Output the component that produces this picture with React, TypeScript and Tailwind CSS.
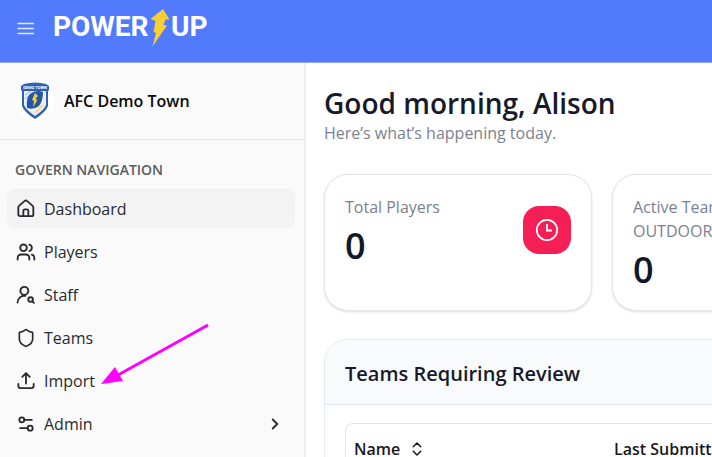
import type { ReactNode } from "react";
import { ChevronRight, ChevronsUpDown, Settings2, Shield, Users } from "lucide-react";

type IconProps = { className?: string };

type NavItem = {
  label: string;
  icon: (props: IconProps) => ReactNode;
  active?: boolean;
  expandable?: boolean;
};

function StrokeIcon({ className, children }: { className?: string; children: ReactNode }) {
  return (
    <svg
      className={className}
      viewBox="0 0 24 24"
      fill="none"
      stroke="currentColor"
      strokeWidth="2.2"
      strokeLinecap="round"
      strokeLinejoin="round"
      aria-hidden="true"
    >
      {children}
    </svg>
  );
}

function HomeIcon({ className }: IconProps) {
  return (
    <StrokeIcon className={className}>
      <path d="M2.8 10.2c0-.9.4-1.7 1.1-2.3l6.2-5.3c1-.9 2.4-.9 3.4 0l6.2 5.3c.7.6 1.1 1.4 1.1 2.3V18.500a2 2 0 0 1-2 2h-14a2 2 0 0 1-2-2Z" />
      <path d="M8.800 20.500v-6a2 2 0 0 1 2-2h2a2 2 0 0 1 2 2v6" />
    </StrokeIcon>
  );
}

function StaffIcon({ className }: IconProps) {
  return (
    <StrokeIcon className={className}>
      <circle cx="10" cy="7" r="4.8" />
      <path d="M1.800 21a8.200 8.200 0 0 1 9.500-8" />
      <circle cx="17.500" cy="17.500" r="2.800" />
      <path d="m21.500 21.500-1.900-1.900" />
    </StrokeIcon>
  );
}

function ImportIcon({ className }: IconProps) {
  return (
    <StrokeIcon className={className}>
      <path d="M2.8 15.5V18a2.5 2.5 0 0 0 2.5 2.5h13.4a2.5 2.5 0 0 0 2.5-2.5v-2.5" />
      <path d="M12 15V2.5M7.5 7 12 2.5 16.5 7" />
    </StrokeIcon>
  );
}

const navItems: NavItem[] = [
  { label: "Dashboard", icon: HomeIcon, active: true },
  { label: "Players", icon: ({ className }) => <Users className={className} strokeWidth={2.2} /> },
  { label: "Staff", icon: StaffIcon },
  { label: "Teams", icon: ({ className }) => <Shield className={className} strokeWidth={2} /> },
  { label: "Import", icon: ImportIcon },
  { label: "Admin", icon: ({ className }) => <Settings2 className={className} strokeWidth={2.2} />, expandable: true }
];

function Logo() {
  return (
    <a href="#" aria-label="Power Up">
      <svg className="h-11 w-[156px]" viewBox="0 0 156 44" aria-hidden="true">
        <g className="fill-white font-['Roboto',sans-serif] text-[28px] font-bold">
          <text x="1" y="27">POWER</text>
          <text x="119" y="27">UP</text>
        </g>
        <path
          d="M111 0 L117.5 10.5 L113.5 10.5 L111.5 16 L115 16.5 L100.5 37.5 L104 24 L101.5 23 L103.5 12 L98.5 10 Z"
          fill="#f7cf35"
        />
      </svg>
    </a>
  );
}

function ClubCrest() {
  return (
    <svg className="size-10 shrink-0" viewBox="0 0 40 40" aria-hidden="true">
      <circle cx="20" cy="20" r="19" fill="#fff" />
      <path d="M9 3 Q20 0 31 3 L34 5 V9 L33 10 V25 Q31 31 20 38 Q9 31 7 25 V10 L6 9 V5 Z" fill="#2f62b5" />
      <path d="M9 10 H31 V24 Q29 29 20 35 Q11 29 9 24 Z" fill="#e9f0fb" />
      <path d="M10 14 L16 10 M10 18 L20 10" stroke="#8fb0e2" strokeWidth="1" />
      <path d="M14 14 Q21 8 28 11 Q28 20 24 25 Q19 29 12 27 Q11 19 14 14 Z" fill="#2456a8" />
      <path d="M20 12 L23 15 L21 17 L22 20 L18 26 L19 20 L17 19 Z" fill="#f3cf3a" />
      <path d="M20 32 L28 24" stroke="#f0dc86" strokeWidth="2" />
      <text x="20" y="8" textAnchor="middle" className="fill-white font-['Roboto',sans-serif] text-[4px] font-bold">
        DEMO TOWN
      </text>
    </svg>
  );
}

function Sidebar() {
  return (
    <aside className="w-[306px] shrink-0 border-r-2 border-[#ececee] bg-[#fafafa]">
      <div className="flex h-[77px] items-center gap-[9px] border-b border-[#e5e5e7] px-[15px]">
        <ClubCrest />
        <span className="text-base font-semibold text-[#0a0a0a]">AFC Demo Town</span>
      </div>
      <nav aria-labelledby="nav-heading" className="px-[7px] pt-5">
        <h2 id="nav-heading" className="px-2 text-sm leading-5 font-semibold text-[#5c5c60]">GOVERN NAVIGATION</h2>
        <ul className="mt-[9px] flex flex-col gap-1 pr-0.5">
          {navItems.map(({ label, icon: Icon, active, expandable }) => (
            <li key={label}>
              <a
                className="flex h-[39px] items-center gap-2 rounded-lg px-[9px] text-base text-[#2a2a2e] data-active:bg-[#f3f3f3]"
                data-active={active || undefined}
                aria-current={active ? "page" : undefined}
                href="#"
              >
                <Icon className="size-5 shrink-0" />
                <span className="flex-1">{label}</span>
                {expandable ? <ChevronRight className="mr-0.5 size-[18px]" strokeWidth={2.5} /> : null}
              </a>
            </li>
          ))}
        </ul>
      </nav>
    </aside>
  );
}

function StatCard({ lines, value, icon }: { lines: string[]; value: number; icon?: boolean }) {
  return (
    <section className="flex h-[137px] items-start justify-between rounded-3xl border border-[#e5e5e7] bg-white p-5 shadow-sm">
      <div>
        <h2 className="text-base leading-6 text-[#7b8190]">
          {lines.map((line) => <span key={line} className="block">{line}</span>)}
        </h2>
        <p className="mt-[7px] text-4xl leading-10 font-semibold text-[#111827]">{value}</p>
      </div>
      {icon ? (
        <span className="mt-[11px] flex size-12 items-center justify-center rounded-2xl bg-[#f51f56]">
          <svg className="size-6" viewBox="0 0 24 24" fill="none" stroke="#fff" strokeWidth="1.8" aria-hidden="true">
            <circle cx="12" cy="12" r="10.2" />
            <path d="M12 6 V12.5 H17" />
          </svg>
        </span>
      ) : null}
    </section>
  );
}

function ReviewPanel() {
  return (
    <section className="mt-7 w-[844px] rounded-t-3xl border border-[#e8e9ec]">
      <h2 className="rounded-t-3xl border-b border-[#e1e4e8] bg-[#f8fafc] px-5 pt-5 pb-4 text-xl leading-7 font-semibold text-[#171a2b]">
        Teams Requiring Review
      </h2>
      <div className="px-5 pt-[18px]">
        <div className="rounded-t-lg border border-b-0 border-[#e5e5e7]">
          <table className="w-full table-fixed text-left text-base text-[#18181b]">
            <thead>
              <tr>
                <th scope="col" className="w-[260px] px-2 pt-[13px] font-semibold">
                  <button type="button" className="flex items-center gap-2">
                    Name
                    <ChevronsUpDown className="size-[18px]" />
                  </button>
                </th>
                <th scope="col" className="px-2 pt-[13px] font-semibold">Last Submitted</th>
              </tr>
            </thead>
          </table>
        </div>
      </div>
    </section>
  );
}

export default function App() {
  return (
    <div className="relative flex h-screen flex-col overflow-hidden bg-white font-['Open_Sans','Noto_Sans',sans-serif]">
      <header className="flex h-[63px] shrink-0 items-start gap-[17px] border-b border-[#8ea6f5] bg-[#517afc] px-[17px] pt-[9px]">
        <button type="button" aria-label="Toggle menu" className="mt-[13px] text-white">
          <svg className="h-3.5 w-[18px]" viewBox="0 0 18 14" stroke="#e6ecff" strokeWidth="1.6" aria-hidden="true">
            <path d="M0.5 1.5 H17 M0.5 6.5 H17 M0.5 11.5 H17" />
          </svg>
        </button>
        <Logo />
      </header>
      <div className="flex min-h-0 flex-1">
        <Sidebar />
        <main className="min-w-0 flex-1 overflow-hidden px-[18px] pt-6">
          <h1 className="text-[28px] leading-8 font-semibold text-[#171a2b]">Good morning, Alison</h1>
          <p className="mt-0.5 text-base leading-6 text-[#7b8190]">Here’s what’s happening today.</p>
          <div className="mt-[29px] grid auto-cols-[268px] grid-flow-col gap-5">
            <StatCard lines={["Total Players"]} value={0} icon />
            <StatCard lines={["Active Teams", "OUTDOOR"]} value={0} />
          </div>
          <ReviewPanel />
        </main>
      </div>
      <svg className="pointer-events-none absolute top-[320px] left-[100px] h-16 w-28" viewBox="0 0 112 64" aria-hidden="true">
        <path d="M108 5 L18 55" stroke="#ff00ff" strokeWidth="3" />
        <path d="M1 64 L15 47 L23 61 Z" fill="#ff00ff" />
      </svg>
    </div>
  );
}
